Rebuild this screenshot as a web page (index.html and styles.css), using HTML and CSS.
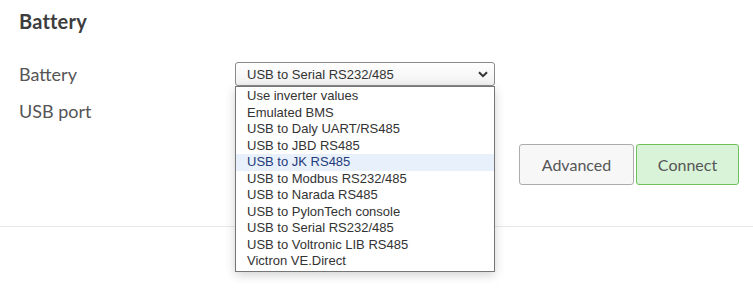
FILE: index.html
```html
<!DOCTYPE html>
<html>
<head>
<meta charset="utf-8">
<link rel="stylesheet" href="styles.css">
</head>
<body>
<div class="panel">
  <h2 class="title">Battery</h2>
  <div class="form">
    <div class="row">
      <span class="label">Battery</span>
      <div class="control">
        <div class="select">
          <span>USB to Serial RS232/485</span>
          <svg class="chev" width="10" height="7" viewBox="0 0 10 7"><path d="M1 1.2 L5 5.2 L9 1.2" fill="none" stroke="#333" stroke-width="2"/></svg>
        </div>
        <ul class="menu">
          <li>Use inverter values</li>
          <li>Emulated BMS</li>
          <li>USB to Daly UART/RS485</li>
          <li>USB to JBD RS485</li>
          <li class="hl">USB to JK RS485</li>
          <li>USB to Modbus RS232/485</li>
          <li>USB to Narada RS485</li>
          <li>USB to PylonTech console</li>
          <li>USB to Serial RS232/485</li>
          <li>USB to Voltronic LIB RS485</li>
          <li>Victron VE.Direct</li>
        </ul>
      </div>
    </div>
    <div class="row">
      <span class="label">USB port</span>
      <div class="control"><div class="select"></div></div>
    </div>
  </div>
  <div class="actions">
    <button class="btn">Advanced</button>
    <button class="btn primary">Connect</button>
  </div>
</div>
<div class="divider"></div>
</body>
</html>
```
FILE: styles.css
```css
html, body { margin: 0; padding: 0; background: #fff; }
html { height: 100%; }
body { min-height: 100%; font-family: Lato, "Open Sans", sans-serif; color: #555; }
.panel { padding: 9px 14px 0 19px; position: relative; z-index: 2; }
.title { margin: 0; font-size: 20px; line-height: 24px; font-weight: 700; color: #3d3d3d; letter-spacing: 0.2px; }
.form { margin-top: 29px; display: flex; flex-direction: column; gap: 13px; }
.row { display: grid; grid-template-columns: 216px 260px; align-items: center; height: 24px; }
.label { font-size: 18px; color: #555; }
.control { position: relative; }
.select {
  box-sizing: border-box; height: 24px; border: 1px solid #8a8a8a; border-radius: 3px;
  background: linear-gradient(#ffffff, #f2f2f2);
  font-family: "Liberation Sans", Arial, sans-serif; font-size: 13px; color: #333;
  display: flex; align-items: center; justify-content: space-between; padding: 0 6px 0 11px;
}
.chev { display: block; }
.menu {
  position: absolute; left: 0; top: 24px; z-index: 5;
  margin: 0; padding: 1px 0 0; list-style: none; box-sizing: border-box; width: 260px; height: 186px;
  border: 1px solid #767676; background: #fff; box-shadow: 0 3px 10px rgba(0,0,0,0.18);
  font-family: "Liberation Sans", Arial, sans-serif; font-size: 13px; color: #333;
}
.menu li { height: 16.55px; line-height: 16px; padding-left: 11px; }
.menu li.hl { background: #e8f0fb; color: #1f3b7a; }
.actions { display: flex; justify-content: flex-end; gap: 2px; margin-top: 21px; }
.btn {
  box-sizing: border-box; height: 41px; border-radius: 3px; font-family: Lato, "Open Sans", sans-serif;
  font-size: 16px; color: #555; background: #f7f7f7; border: 1px solid #acacac; padding: 0;
}
.btn.primary { background: #d9f3d9; border-color: #72c05c; width: 103px; }
.btn:first-child { width: 115px; }
.divider { margin-top: 41px; height: 1px; background: #e8e8e8; position: relative; z-index: 1; }
```
